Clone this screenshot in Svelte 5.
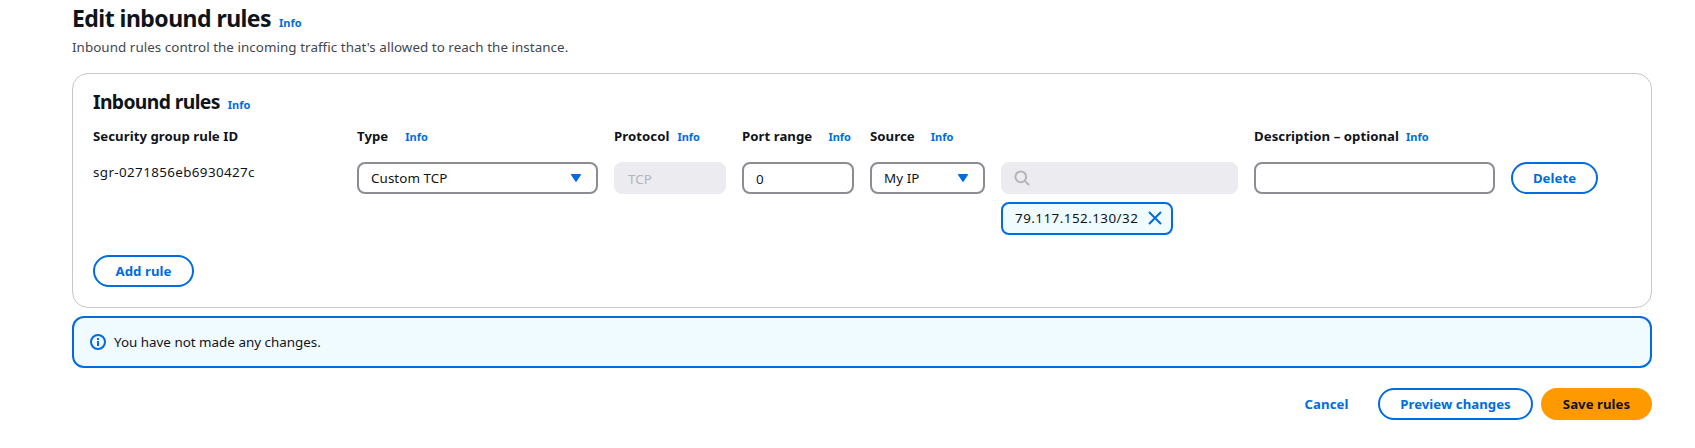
<script>
  const headers = [
    { label: 'Security group rule ID' },
    { label: 'Type', info: true, gap: 17 },
    { label: 'Protocol', info: true, gap: 8 },
    { label: 'Port range', info: true, spread: true },
    { label: 'Source', info: true, gap: 16 },
    { label: '' },
    { label: 'Description – optional', info: true, gap: 7 },
    { label: '' }
  ];
</script>

{#snippet caret()}
  <svg class="caret" width="12" height="10" viewBox="0 0 12 10" aria-hidden="true">
    <path d="M1.7 1.7h8.6L6 8.2z" fill="#006ce0" stroke="#006ce0" stroke-width="1.4" stroke-linejoin="round" />
  </svg>
{/snippet}

<main>
  <header>
    <h1>Edit inbound rules</h1>
    <a class="info">Info</a>
  </header>
  <p class="lead">Inbound rules control the incoming traffic that's allowed to reach the instance.</p>

  <section class="card">
    <div class="cardhead">
      <h2>Inbound rules</h2>
      <a class="info">Info</a>
    </div>

    <div class="grid labels">
      {#each headers as h}
        <div class="label" class:spread={h.spread} style:gap={`${h.gap ?? 0}px`}>
          <span>{h.label}</span>
          {#if h.info}<a class="info">Info</a>{/if}
        </div>
      {/each}
    </div>

    <div class="grid fields">
      <div class="id">sgr-0271856eb6930427c</div>
      <div class="control select"><span>Custom TCP</span>{@render caret()}</div>
      <div class="control disabled typed"><span>TCP</span></div>
      <div class="control typed"><span>0</span></div>
      <div class="control select"><span>My IP</span>{@render caret()}</div>
      <div class="source">
        <div class="control disabled search">
          <svg width="16" height="16" viewBox="0 0 16 16" fill="none" stroke="#b4b4bb" stroke-width="2" aria-hidden="true">
            <circle cx="6.8" cy="6.8" r="5.4" />
            <path d="M10.6 10.6l4.4 4.4" />
          </svg>
        </div>
        <div class="token">
          <span>79.117.152.130/32</span>
          <svg width="14" height="14" viewBox="0 0 14 14" fill="none" stroke="#006ce0" stroke-width="2" aria-hidden="true">
            <path d="M1 1l12 12M13 1L1 13" />
          </svg>
        </div>
      </div>
      <div class="control"></div>
      <button class="delete">Delete</button>
    </div>

    <button class="add">Add rule</button>
  </section>

  <div class="alert">
    <svg width="16" height="16" viewBox="0 0 16 16" fill="none" stroke="#006ce0" stroke-width="2" aria-hidden="true">
      <circle cx="8" cy="8" r="7" />
      <path d="M8 4v2M8 7v5" />
    </svg>
    <span>You have not made any changes.</span>
  </div>

  <footer>
    <button class="link">Cancel</button>
    <button class="preview">Preview changes</button>
    <button class="primary">Save rules</button>
  </footer>
</main>

<style>
  :global(body) {
    background: #fff;
  }
  main {
    box-sizing: border-box;
    width: 1695px;
    height: 448px;
    padding: 4px 43px 0 72px;
    overflow: hidden;
    color: #0f141a;
    font: 13.4px/20px 'Noto Sans', sans-serif;
  }
  main * {
    box-sizing: border-box;
    white-space: nowrap;
  }
  header,
  .cardhead {
    display: flex;
    align-items: baseline;
  }
  h1 {
    margin: 0 8px 0 0;
    font-size: 23px;
    line-height: 28px;
    font-weight: 700;
    letter-spacing: -0.54px;
  }
  h2 {
    margin: 0 8px 0 0;
    font-size: 19.3px;
    line-height: 25px;
    font-weight: 700;
    letter-spacing: -0.6px;
  }
  .info {
    color: #006ce0;
    font-size: 11px;
    font-weight: 700;
    line-height: 16px;
  }
  .lead {
    margin: 5px 0 16px;
    color: #424650;
    letter-spacing: 0.05px;
  }
  .card {
    height: 235px;
    padding: 15px 20px 0;
    border: 1px solid #c6c6cd;
    border-radius: 16px;
  }
  .grid {
    display: grid;
    grid-template-columns: 248px 241px 112px 112px 115px 237px 241px 87px;
    column-gap: 16px;
    align-items: start;
  }
  .labels {
    margin-top: 12px;
    height: 20px;
  }
  .label {
    display: flex;
    align-items: baseline;
    font-size: 13.2px;
    font-weight: 700;
    letter-spacing: 0.05px;
  }
  .label .info {
    letter-spacing: 0;
  }
  .spread {
    justify-content: space-between;
    padding-right: 3px;
  }
  .fields {
    margin-top: 16px;
  }
  .id {
    letter-spacing: 0.38px;
  }
  .control {
    display: flex;
    align-items: center;
    height: 32px;
    padding: 0 12px;
    border: 2px solid #8c8c94;
    border-radius: 8px;
  }
  .select {
    justify-content: space-between;
    padding-right: 14px;
    letter-spacing: 0.07px;
  }
  .typed {
    padding-top: 2px;
  }
  .disabled {
    border-color: #ebebf0;
    background: #ebebf0;
    color: #b4b4bb;
  }
  .search {
    padding: 0 0 0 11px;
  }
  .caret,
  svg {
    display: block;
    flex: none;
  }
  .token {
    display: flex;
    align-items: center;
    justify-content: space-between;
    width: 172px;
    height: 33px;
    margin-top: 8px;
    padding: 0 9px 1px 12px;
    border: 2px solid #006ce0;
    border-radius: 8px;
    background: #f0fbff;
    letter-spacing: 0.47px;
  }
  button {
    height: 32px;
    padding: 0;
    border: 2px solid #006ce0;
    border-radius: 20px;
    background: #fff;
    color: #006ce0;
    font: 700 13.2px/20px 'Noto Sans', sans-serif;
    letter-spacing: 0.04px;
  }
  .delete {
    width: 87px;
  }
  .add {
    display: block;
    width: 101px;
    margin-top: 20px;
  }
  .alert {
    display: flex;
    align-items: center;
    gap: 8px;
    height: 52px;
    margin-top: 8px;
    padding: 0 16px;
    border: 2px solid #006ce0;
    border-radius: 12px;
    background: #f0fbff;
  }
  footer {
    display: flex;
    justify-content: flex-end;
    gap: 8px;
    margin-top: 20px;
  }
  .link {
    width: 87px;
    border-color: transparent;
  }
  .preview {
    width: 155px;
  }
  .primary {
    width: 111px;
    border-color: #ff9900;
    background: #ff9900;
    color: #0f141a;
  }
</style>
